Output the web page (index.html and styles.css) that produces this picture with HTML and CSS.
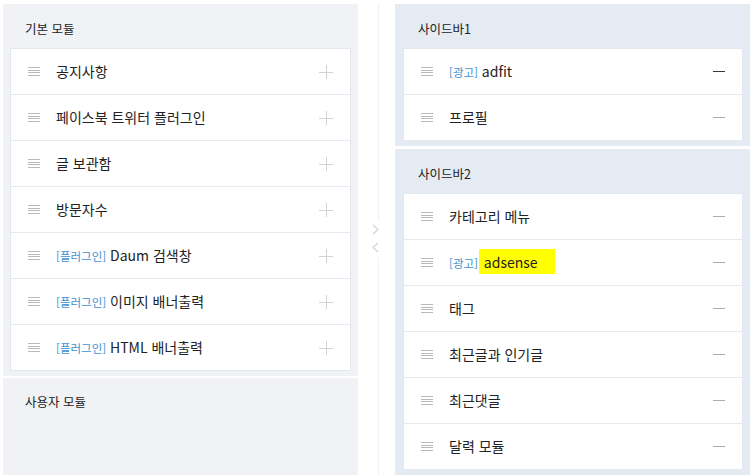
FILE: index.html
```html
<!DOCTYPE html>
<html lang="ko">
  <head>
    <meta charset="UTF-8" />
    <meta name="viewport" content="width=device-width, initial-scale=1.0" />
    <title>모듈 관리</title>
    <link rel="stylesheet" href="styles.css">
  </head>
  <body>
    <div class="layout">
      <div class="column left">
        <div class="panel">
          <div class="panel-title">기본 모듈</div>
          <ul class="module-list">
            <li><span class="grip"></span><span class="name">공지사항</span><span class="add"></span></li>
            <li><span class="grip"></span><span class="name">페이스북 트위터 플러그인</span><span class="add"></span></li>
            <li><span class="grip"></span><span class="name">글 보관함</span><span class="add"></span></li>
            <li><span class="grip"></span><span class="name">방문자수</span><span class="add"></span></li>
            <li><span class="grip"></span><span class="name"><em>[플러그인]</em> Daum 검색창</span><span class="add"></span></li>
            <li><span class="grip"></span><span class="name"><em>[플러그인]</em> 이미지 배너출력</span><span class="add"></span></li>
            <li><span class="grip"></span><span class="name"><em>[플러그인]</em> HTML 배너출력</span><span class="add"></span></li>
          </ul>
        </div>
        <div class="panel grow">
          <div class="panel-title">사용자 모듈</div>
        </div>
      </div>

      <div class="divider">
        <svg class="arrows" width="10" height="30" viewBox="0 0 10 30">
          <path d="M2 1 L7 5.5 L2 10" fill="none" stroke="#cfd4dc" stroke-width="1.2"/>
          <path d="M7 19 L2 23.5 L7 28" fill="none" stroke="#cfd4dc" stroke-width="1.2"/>
        </svg>
      </div>

      <div class="column right">
        <div class="panel">
          <div class="panel-title">사이드바1</div>
          <ul class="module-list">
            <li><span class="grip"></span><span class="name"><em>[광고]</em> adfit</span><span class="remove dark"></span></li>
            <li><span class="grip"></span><span class="name">프로필</span><span class="remove"></span></li>
          </ul>
        </div>
        <div class="panel grow">
          <div class="panel-title">사이드바2</div>
          <ul class="module-list">
            <li><span class="grip"></span><span class="name">카테고리 메뉴</span><span class="remove"></span></li>
            <li><span class="grip"></span><span class="name"><em>[광고]</em> <mark>adsense</mark></span><span class="remove"></span></li>
            <li><span class="grip"></span><span class="name">태그</span><span class="remove"></span></li>
            <li><span class="grip"></span><span class="name">최근글과 인기글</span><span class="remove"></span></li>
            <li><span class="grip"></span><span class="name">최근댓글</span><span class="remove"></span></li>
            <li><span class="grip"></span><span class="name">달력 모듈</span><span class="remove"></span></li>
          </ul>
        </div>
      </div>
    </div>
  </body>
</html>
```

FILE: styles.css
```css
body {
  margin: 0;
  padding: 0;
  font-family: "Noto Sans CJK KR", "Noto Sans", sans-serif;
  background-color: #fff;
  color: #222;
  overflow: hidden;
}

.layout {
  display: flex;
  height: 475px;
  padding: 4px 0 0 3px;
  box-sizing: border-box;
}

.column {
  display: flex;
  flex-direction: column;
  width: 355px;
  flex-shrink: 0;
  gap: 3px;
}

.left {
  gap: 2px;
}

.left .panel {
  background-color: #f0f2f6;
}

.right {
  width: 356px;
}

.right .panel {
  background-color: #e5ebf2;
}

.panel {
  padding: 0 7px 5px 7px;
}

.right .panel {
  padding: 0 8px 5px 8px;
}

.panel.grow {
  flex: 1;
}

.panel-title {
  height: 44px;
  line-height: 50px;
  padding-left: 15px;
  font-size: 12.5px;
  color: #222;
}

.left .panel.grow .panel-title {
  line-height: 47px;
}

.module-list {
  list-style: none;
  margin: 0;
  padding: 0;
  background-color: #fff;
  border: 1px solid #e3e7ee;
}

.module-list li {
  display: flex;
  align-items: center;
  height: 45px;
  padding: 0 17px 0 17px;
  border-top: 1px solid #e6e9ef;
}

.module-list li:first-child {
  border-top: none;
}

.grip {
  width: 12px;
  height: 9px;
  margin-right: 16px;
  margin-top: -1px;
  background: repeating-linear-gradient(#b9b9b9 0 1px, transparent 1px 2.67px);
}

.name {
  flex: 1;
  font-size: 14px;
  color: #222;
  margin-top: -2px;
}

.name em {
  font-style: normal;
  font-size: 11.5px;
  color: #3d8fd1;
}

.name mark {
  background-color: #ffff00;
  color: #222;
  padding: 3px 17px 2px 5px;
  margin-left: -3px;
}

.add {
  position: relative;
  width: 14px;
  height: 14px;
}

.add::before,
.add::after {
  content: "";
  position: absolute;
  background-color: #cfd2d7;
}

.add::before {
  left: 0;
  top: 7px;
  width: 14px;
  height: 1px;
}

.add::after {
  left: 7px;
  top: 0;
  width: 1px;
  height: 14px;
}

.remove {
  width: 12px;
  height: 1px;
  background-color: #a9adb3;
}

.remove.dark {
  height: 1.5px;
  background-color: #333a44;
}

.divider {
  width: 34px;
  flex-shrink: 0;
  margin-left: 3px;
  display: flex;
  flex-direction: column;
  align-items: center;
  padding-top: 216px;
  box-sizing: border-box;
  background: linear-gradient(#f1f2f5, #f1f2f5) no-repeat 17px 0 / 1px 100%;
}

.arrows {
  display: block;
  background-color: #fff;
  padding: 4px 0;
  margin-left: -4px;
}
```
